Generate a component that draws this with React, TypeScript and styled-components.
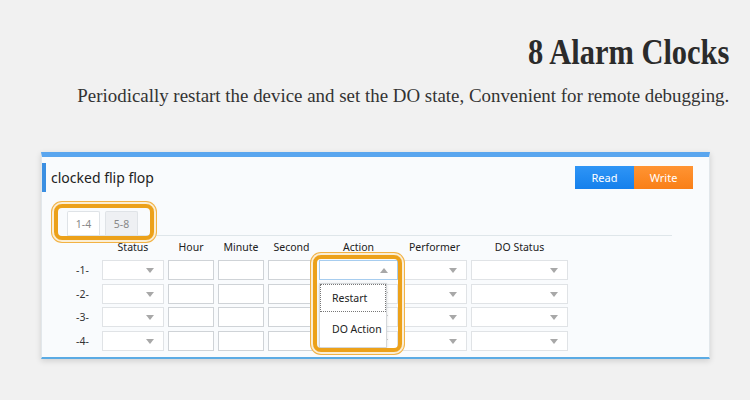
import styled, { createGlobalStyle } from "styled-components";

const GlobalStyle = createGlobalStyle`
  * { box-sizing: border-box; }
  html, body {
    margin: 0;
    width: 750px;
    height: 400px;
    overflow: hidden;
    background: #f1f1f1;
  }
`;

const columns = ["Status", "Hour", "Minute", "Second", "Action", "Performer", "DO Status"];
const kinds: ("select" | "input")[] = ["select", "input", "input", "input", "select", "select", "select"];
const grid = "31px 62px 46px 46px 47px 79px 65px 97px";

export default function App() {
  return (
    <Page>
      <GlobalStyle />
      <Intro>
        <Title>8 Alarm Clocks</Title>
        <Subtitle>
          Periodically restart the device and set the DO state, Convenient for remote debugging.
        </Subtitle>
      </Intro>

      <Panel>
        <PanelHeader>
          <PanelTitle>clocked flip flop</PanelTitle>
          <ButtonGroup>
            <ActionButton $tone="blue">Read</ActionButton>
            <ActionButton $tone="orange">Write</ActionButton>
          </ButtonGroup>
        </PanelHeader>

        <TabBar>
          <Tab $active>1-4</Tab>
          <Tab>5-8</Tab>
        </TabBar>

        <HeadRow>
          <span />
          {columns.map((c) => (
            <HeadCell key={c}>{c}</HeadCell>
          ))}
        </HeadRow>

        <Rows>
          {[1, 2, 3, 4].map((n) => (
            <RowFrag key={n}>
              <RowLabel>-{n}-</RowLabel>
              {kinds.map((k, i) => {
                const open = n === 1 && i === 4;
                if (k === "input") return <Field key={i} />;
                return (
                  <Select key={i} $focus={open}>
                    <Caret $up={open} />
                    {open && (
                      <Menu>
                        <MenuItem $focused>Restart</MenuItem>
                        <MenuItem>DO Action</MenuItem>
                      </Menu>
                    )}
                  </Select>
                );
              })}
            </RowFrag>
          ))}
        </Rows>

        <Highlight style={{ left: 12, top: 47, width: 100, height: 36 }} />
        <Highlight style={{ left: 271, top: 98, width: 89, height: 97 }} />
      </Panel>
    </Page>
  );
}

const Page = styled.div`
  width: 750px;
  height: 400px;
  display: flex;
  flex-direction: column;
`;

const Intro = styled.div`
  display: flex;
  flex-direction: column;
  align-items: flex-end;
  padding-right: 21px;
  padding-top: 33px;
  color: #2b2b2b;
  font-family: "Liberation Serif", "Times New Roman", serif;
`;

const Title = styled.h1`
  margin: 0;
  font-size: 35px;
  line-height: 40px;
  font-weight: 700;
  transform: scaleX(0.87);
  transform-origin: right center;
`;

const Subtitle = styled.p`
  margin: 12px 0 0;
  font-size: 19px;
  line-height: 22px;
  color: #333;
  transform: scaleX(0.995);
  transform-origin: right center;
`;

const Panel = styled.section`
  position: relative;
  margin: 45px 0 0 41px;
  width: 669px;
  background: #f9fbfd;
  border: 1px solid #e2e7eb;
  border-top: 5px solid #5aa6ef;
  border-bottom: 2px solid #5babe4;
  box-shadow: 0 2px 6px rgba(0, 0, 0, 0.14);
  padding-bottom: 6px;
  font-family: "Noto Sans", "Open Sans", sans-serif;
  color: #333;
`;

const PanelHeader = styled.div`
  margin-top: 6px;
  height: 29px;
  display: flex;
  align-items: center;
  justify-content: space-between;
  padding-right: 16px;
`;

const PanelTitle = styled.h2`
  margin: 0;
  height: 29px;
  display: flex;
  align-items: center;
  border-left: 4px solid #3b8fe2;
  padding-left: 5px;
  font-size: 14px;
  font-weight: 400;
  color: #222;
`;

const ButtonGroup = styled.div`
  display: flex;
`;

const ActionButton = styled.button<{ $tone: "blue" | "orange" }>`
  width: 59px;
  height: 23px;
  border: none;
  padding: 0;
  color: #fff;
  font-family: inherit;
  font-size: 11px;
  background: ${(p) =>
    p.$tone === "blue"
      ? "linear-gradient(#2f95f6, #1580ec)"
      : "linear-gradient(#ff9433, #f97f17)"};
`;

const TabBar = styled.div`
  margin: 19px 37px 0 25px;
  display: flex;
  gap: 5px;
  border-bottom: 1px solid #dfe6ea;
`;

const Tab = styled.div<{ $active?: boolean }>`
  width: 33px;
  height: 24px;
  display: flex;
  align-items: center;
  justify-content: center;
  font-size: 10.5px;
  color: #888;
  border: 1px solid #dfe3e7;
  border-bottom: none;
  border-radius: 2px 2px 0 0;
  background: ${(p) => (p.$active ? "#ffffff" : "#eef0f3")};
  margin-bottom: ${(p) => (p.$active ? "-1px" : "0")};
`;

const HeadRow = styled.div`
  margin-left: 25px;
  display: grid;
  grid-template-columns: ${grid};
  column-gap: 4px;
  height: 22px;
  margin-bottom: 2px;
`;

const HeadCell = styled.div`
  text-align: center;
  font-size: 10.5px;
  line-height: 22px;
  color: #222;
`;

const Rows = styled.div`
  margin-left: 25px;
  display: grid;
  grid-template-columns: ${grid};
  grid-auto-rows: 20px;
  column-gap: 4px;
  row-gap: 3.5px;
`;

const RowFrag = styled.div`
  display: contents;
`;

const RowLabel = styled.div`
  font-size: 10.5px;
  line-height: 20px;
  text-align: center;
  color: #333;
`;

const Field = styled.div`
  background: #fff;
  border: 1px solid #cfd3d7;
`;

const Select = styled.div<{ $focus?: boolean }>`
  position: relative;
  background: #fff;
  border: 1px solid ${(p) => (p.$focus ? "#a7cdef" : "#e0e3e6")};
`;

const Caret = styled.span<{ $up?: boolean }>`
  position: absolute;
  right: 9px;
  top: 50%;
  margin-top: -2px;
  width: 0;
  height: 0;
  border-left: 4px solid transparent;
  border-right: 4px solid transparent;
  ${(p) =>
    p.$up ? "border-bottom: 5px solid #a8a8a8;" : "border-top: 5px solid #a8a8a8;"}
`;

const Menu = styled.div`
  position: absolute;
  left: -1px;
  top: 22px;
  width: 68px;
  height: 65px;
  background: #fff;
  border: 1px solid #d4d7da;
  box-shadow: 0 1px 3px rgba(0, 0, 0, 0.12);
  z-index: 2;
  display: flex;
  flex-direction: column;
`;

const MenuItem = styled.div<{ $focused?: boolean }>`
  height: ${(p) => (p.$focused ? "28px" : "34px")};
  display: flex;
  align-items: center;
  padding-left: 11px;
  font-size: 10.5px;
  color: #222;
  border: 1px ${(p) => (p.$focused ? "dotted #777" : "solid transparent")};
`;

const Highlight = styled.div`
  position: absolute;
  border: 4px solid #eca11a;
  border-radius: 8px;
  box-shadow: 0 0 0 2px #fbeed5, 0 0 0 3px #f2b244;
  pointer-events: none;
  z-index: 3;
`;
